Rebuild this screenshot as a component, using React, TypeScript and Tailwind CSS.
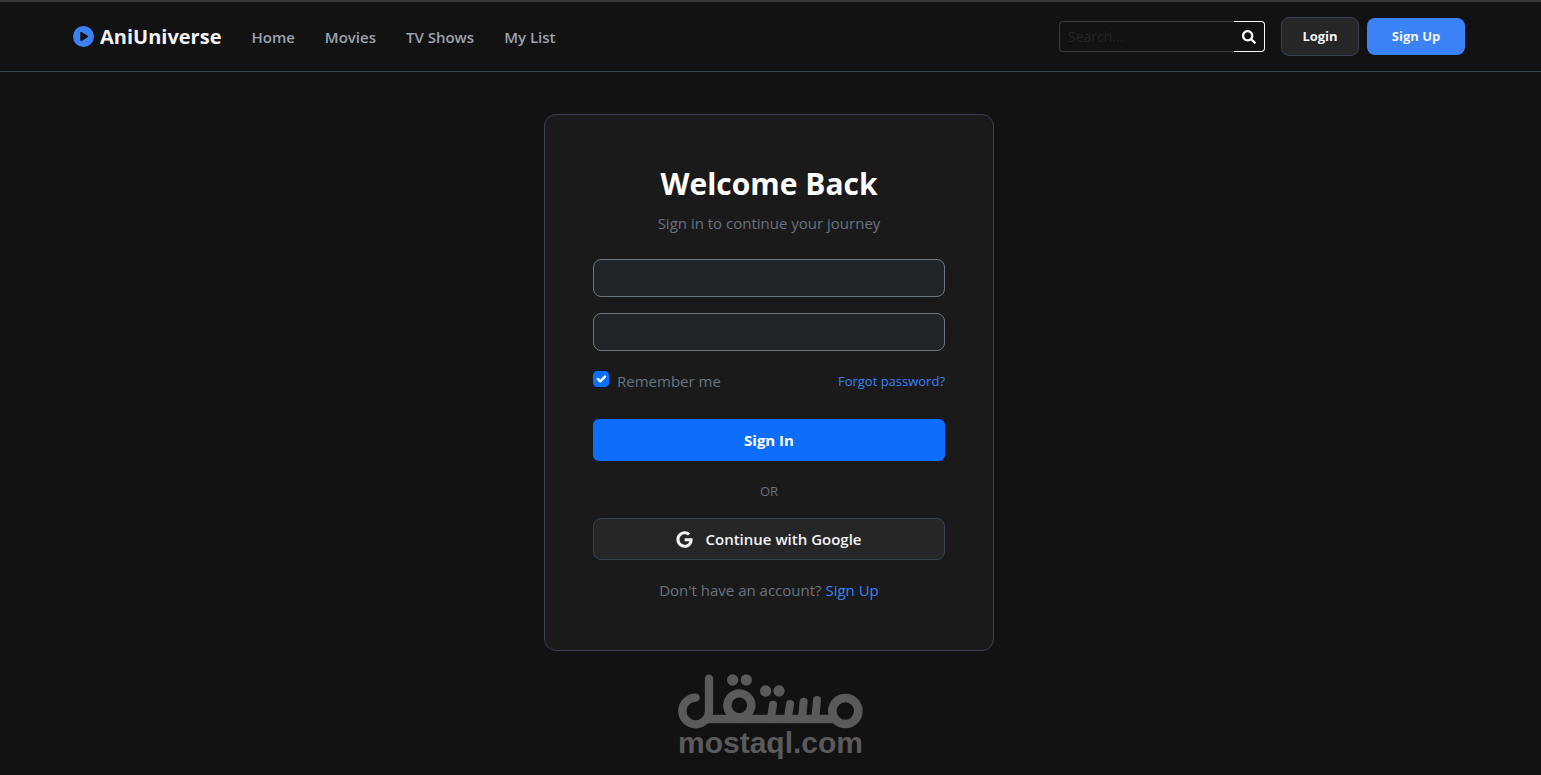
import React from "react";
import { FaGoogle, FaSearch } from "react-icons/fa";
import { FaCirclePlay } from "react-icons/fa6";

const links = ["Home", "Movies", "TV Shows", "My List"];

function Header() {
  return (
    <header className="border-t-2 border-b border-t-[#383838] border-b-[#374151] pr-[3px]">
      <div className="mx-auto flex h-[69px] max-w-[1416px] items-center px-3">
        <a href="#" className="flex items-center gap-1.5 text-xl font-bold text-[#f3f4f6]">
          <FaCirclePlay className="size-[21px] text-[#3b82f6]" aria-hidden="true" />
          AniUniverse
        </a>
        <nav className="ml-[30px] flex gap-[30px]">
          {links.map((label) => (
            <a key={label} href="#" className="text-[15px] leading-6 font-semibold text-[#9ca3af]">
              {label}
            </a>
          ))}
        </nav>
        <div className="ml-auto flex items-center">
          <form className="mr-4 flex h-[31px]" role="search" onSubmit={(e) => e.preventDefault()}>
            <input
              type="search"
              aria-label="Search"
              placeholder="Search..."
              className="w-[175px] rounded-l border border-r-0 border-[#3c3e40] bg-transparent px-2 text-sm text-gray-100 outline-none placeholder:text-[#212529]"
            />
            <button
              type="submit"
              aria-label="Submit search"
              className="flex w-[31px] items-center justify-center rounded-r border border-l-0 border-[#f8f9fa] text-white"
            >
              <FaSearch className="size-[14px]" />
            </button>
          </form>
          <button type="button" className="mr-2 h-[39px] w-[78px] rounded-lg border border-[#374151] bg-[#262626] text-[13px] font-bold text-[#f3f4f6]">
            Login
          </button>
          <button type="button" className="h-[37px] w-[98px] rounded-lg bg-[#3b82f6] text-[13px] font-bold text-[#f3f4f6]">
            Sign Up
          </button>
        </div>
      </div>
    </header>
  );
}

function LoginCard() {
  const inputClass =
    "h-[38px] w-full rounded-lg border border-[#6c757d] bg-[#212529] px-3 text-base text-gray-100 outline-none";
  return (
    <form
      onSubmit={(e) => e.preventDefault()}
      className="flex w-full max-w-[450px] flex-col rounded-xl border border-[#374151] bg-[#1a1a1a] p-12 text-[15px] leading-6 text-[#6b7280]"
    >
      <h1 className="text-center text-3xl leading-[42px] font-bold text-white">Welcome Back</h1>
      <p className="mt-1.5 text-center">Sign in to continue your journey</p>
      <div className="mt-6 flex flex-col gap-4">
        <input type="email" aria-label="Email" className={inputClass} />
        <input type="password" aria-label="Password" className={inputClass} />
      </div>
      <div className="mt-4 flex items-center justify-between leading-7">
        <label className="flex items-start gap-2">
          <span className="relative mt-1 flex size-4">
            <input type="checkbox" defaultChecked className="peer size-4 appearance-none rounded border border-[#6c757d] checked:border-[#0d6efd] checked:bg-[#0d6efd]" />
            <svg viewBox="0 0 20 20" className="pointer-events-none absolute inset-0 hidden size-4 peer-checked:block" fill="none" stroke="white" strokeWidth="3" strokeLinecap="round" strokeLinejoin="round">
              <path d="m6 10 3 3 6-6" />
            </svg>
          </span>
          Remember me
        </label>
        <a href="#" className="text-[13px] text-[#3b82f6]">Forgot password?</a>
      </div>
      <button type="submit" className="mt-6 h-[42px] rounded-md bg-[#0d6efd] text-[15px] font-bold text-white">
        Sign In
      </button>
      <p className="mt-[18px] mb-[15px] text-center text-[13px]">OR</p>
      <button type="button" className="flex h-[42px] items-center justify-center gap-3 rounded-lg border border-[#374151] bg-[#262626] text-[15px] font-semibold text-[#f3f4f6]">
        <FaGoogle className="size-[17px]" aria-hidden="true" />
        Continue with Google
      </button>
      <p className="mt-[18px] text-center">
        Don't have an account? <a href="#" className="text-[#3b82f6]">Sign Up</a>
      </p>
    </form>
  );
}

function Watermark() {
  return (
    <div className="mt-[23px] flex flex-col items-center text-[#5a5a5a]">
      <svg viewBox="24 26 555 165" className="h-[55px] w-[185px]" fill="none" stroke="currentColor" strokeLinecap="round" role="img" aria-label="مستقل">
        <path strokeWidth="25" d="M77 97A40 40 0 1 0 117 137V40" />
        <path strokeWidth="26" d="M112 161H488" />
        <circle cx="208" cy="120" r="36" strokeWidth="25" />
        <circle cx="526" cy="137" r="39" strokeWidth="26" />
        <path strokeWidth="24" d="M309 118L303 158M360 116L354 158M401 109L396 158M441 104L436 158" />
        <g fill="currentColor" stroke="none">
          <circle cx="188" cy="44" r="17" />
          <circle cx="229" cy="44" r="17" />
          <circle cx="287" cy="77" r="17" />
          <circle cx="327" cy="77" r="17" />
        </g>
      </svg>
      <span className="font-['Liberation_Sans',sans-serif] text-[30px] leading-7 font-bold">mostaql.com</span>
    </div>
  );
}

export default function App() {
  return (
    <div className="min-h-screen bg-[#121212] font-['Open_Sans',sans-serif]">
      <Header />
      <main className="pt-[42px]">
        <div className="flex justify-center pr-[3px]">
          <LoginCard />
        </div>
        <Watermark />
      </main>
    </div>
  );
}
